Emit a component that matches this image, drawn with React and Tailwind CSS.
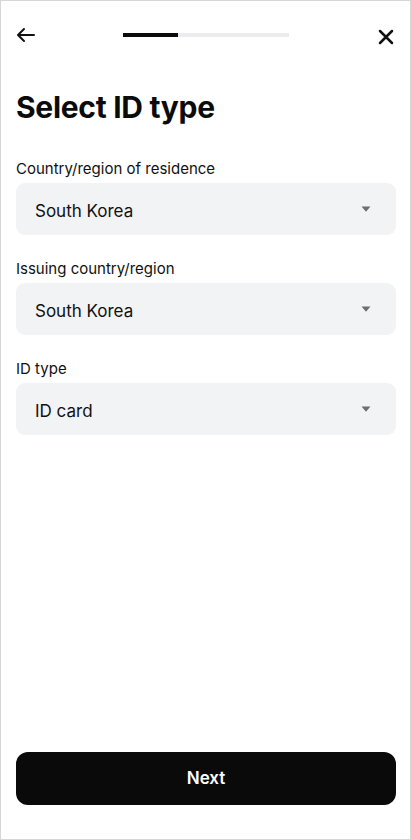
import React from "react";

function Select({ label, value, first }) {
  return (
    <div className={first ? "mt-[34px]" : "mt-[24px]"}>
      <div className="text-[15px] leading-[20px] text-[#111] font-normal">{label}</div>
      <div className="mt-[4px] h-[52px] rounded-[9px] bg-[#f2f3f5] flex items-center justify-between pl-[19px] pr-[25px]">
        <span className="text-[17px] leading-[22px] pt-[3px] text-[#111]">{value}</span>
        <svg width="10" height="6" viewBox="0 0 10 6">
          <path d="M0.5 0.5H9.5L5 5.8Z" fill="#6e6e70" />
        </svg>
      </div>
    </div>
  );
}

export default function App() {
  return (
    <div
      className="w-[411px] h-[840px] bg-white border border-[#d6d6d6] flex flex-col"
      style={{ fontFamily: "Inter, 'Noto Sans', sans-serif" }}
    >
      <div className="h-[68px] flex items-center justify-between px-[14px]">
        <svg width="24" height="24" viewBox="0 0 24 24" fill="none" stroke="#111" strokeWidth="2" strokeLinecap="round" strokeLinejoin="round">
          <path d="M19 12H3M9 6L3 12L9 18" />
        </svg>
        <div className="w-[166px] h-[4px] bg-[#ececee] flex">
          <div className="w-[55px] h-full bg-[#0b0b0b]" />
        </div>
        <svg width="24" height="24" viewBox="0 0 24 24" fill="none" stroke="#111" strokeWidth="2.5" strokeLinecap="round">
          <path d="M8 8L20 20M20 8L8 20" />
        </svg>
      </div>
      <div className="pl-[15px] pr-[14px] flex flex-col flex-1">
        <h1 className="mt-[20px] text-[30px] leading-[36px] font-bold text-[#0b0b0b] tracking-[-0.3px]">Select ID type</h1>
        <Select first label="Country/region of residence" value="South Korea" />
        <Select label="Issuing country/region" value="South Korea" />
        <Select label="ID type" value="ID card" />
        <div className="flex-1" />
        <button className="h-[53px] mb-[34px] pt-[1px] rounded-[12px] bg-[#0a0a0a] text-white text-[17px] font-semibold">
          Next
        </button>
      </div>
    </div>
  );
}
